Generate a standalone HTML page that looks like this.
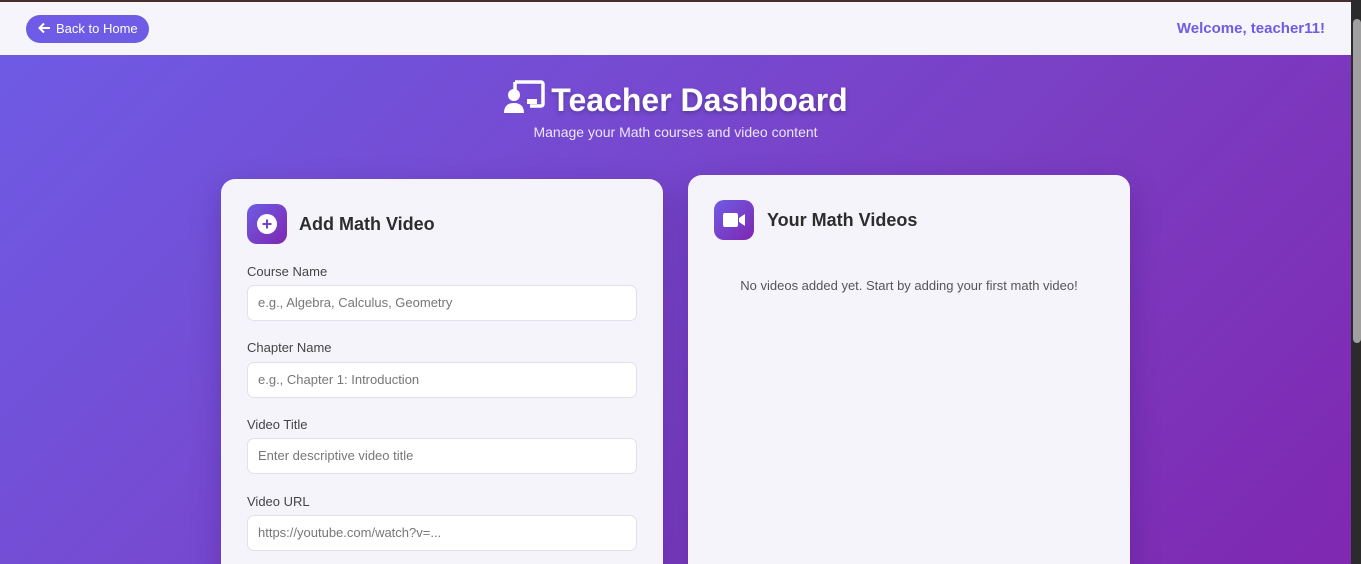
<!DOCTYPE html>
<html><head><meta charset="utf-8"><style>
*{box-sizing:border-box;margin:0;padding:0}
html,body{width:1361px;height:564px;overflow:hidden;font-family:"Liberation Sans",sans-serif}
body{position:relative;background:linear-gradient(135deg,#6e5ce6 0%,#7a3fc4 60%,#7f27b0 100%)}
.topline{position:absolute;left:0;top:0;width:1351px;height:2px;background:#4a2c2c}
.nav{position:absolute;left:0;top:2px;width:1351px;height:53px;background:#f7f5fc}
.back{position:absolute;left:26px;top:13px;width:123px;height:28px;border-radius:14px;background:#6e5ce6;color:#fff;font-size:13px;line-height:28px;padding-left:30px}
.back svg{position:absolute;left:12px;top:7px}
.welcome{position:absolute;right:26px;top:18px;color:#6e5ce6;font-weight:bold;font-size:15px}
.sb{position:absolute;left:1351px;top:0;width:10px;height:564px;background:#2b2b2b}
.thumb{position:absolute;left:2px;top:19px;width:8px;height:324px;background:#a0a0a0;border-radius:4px}
h1{position:absolute;left:0;width:1351px;top:80px;text-align:center;color:#fff;font-size:32px;font-weight:bold;text-shadow:0 2px 4px rgba(0,0,0,.25)}
h1 svg{vertical-align:-3px;margin-right:6px}
.sub{position:absolute;left:0;width:1351px;top:124px;text-align:center;color:#ece6fb;font-size:14px}
.card{position:absolute;background:#f6f4fb;border-radius:14px;box-shadow:0 10px 30px rgba(40,0,90,.25)}
.ic{position:absolute;width:40px;height:40px;border-radius:10px;background:linear-gradient(135deg,#6e5ce6,#7f27b0)}
.ct{position:absolute;font-size:18px;font-weight:bold;color:#2d2d2d}
.lbl{position:absolute;left:26px;font-size:13px;color:#444}
.inp{position:absolute;left:26px;width:390px;height:36px;background:#fff;border:1px solid #e2e0ea;border-radius:7px;font-size:13px;color:#777;padding-left:10px;line-height:34px}
</style></head><body>
<div class="topline"></div>
<div class="nav">
<div class="back"><svg width="13" height="12" viewBox="0 0 13 12"><path d="M12 6H2M6 1.5L1.5 6 6 10.5" stroke="#fff" stroke-width="2" fill="none"/></svg>Back to Home</div>
<div class="welcome">Welcome, teacher11!</div>
</div>
<div class="sb"><div class="thumb"></div></div>
<h1><svg width="42" height="34" viewBox="0 0 42 34"><path d="M12 2h26a2 2 0 0 1 2 2v20a2 2 0 0 1-2 2H27" stroke="#fff" stroke-width="3.5" fill="none"/><path d="M12 2v8" stroke="#fff" stroke-width="3.5"/><rect x="24" y="19" width="10" height="5" fill="#fff"/><circle cx="11" cy="15" r="6" fill="#fff"/><path d="M1 33c0-7 4-10 10-10s10 3 10 10z" fill="#fff"/></svg>Teacher Dashboard</h1>
<div class="sub">Manage your Math courses and video content</div>

<div class="card" style="left:221px;top:179px;width:442px;height:400px">
<div class="ic" style="left:26px;top:25px"><svg width="40" height="40"><circle cx="20" cy="20" r="10" fill="#fff"/><path d="M20 15.5v9M15.5 20h9" stroke="#7a3fc4" stroke-width="2"/></svg></div>
<div class="ct" style="left:78px;top:35px">Add Math Video</div>
<div class="lbl" style="top:85px">Course Name</div>
<div class="inp" style="top:106px">e.g., Algebra, Calculus, Geometry</div>
<div class="lbl" style="top:161px">Chapter Name</div>
<div class="inp" style="top:183px">e.g., Chapter 1: Introduction</div>
<div class="lbl" style="top:238px">Video Title</div>
<div class="inp" style="top:259px">Enter descriptive video title</div>
<div class="lbl" style="top:315px">Video URL</div>
<div class="inp" style="top:336px">https://youtube.com/watch?v=...</div>
</div>

<div class="card" style="left:688px;top:175px;width:442px;height:404px">
<div class="ic" style="left:26px;top:25px"><svg width="40" height="40"><rect x="9" y="13" width="15" height="14" rx="2" fill="#fff"/><path d="M25 18l6-4v12l-6-4z" fill="#fff"/></svg></div>
<div class="ct" style="left:79px;top:35px">Your Math Videos</div>
<div style="position:absolute;left:0;width:442px;top:103px;text-align:center;font-size:13px;color:#555">No videos added yet. Start by adding your first math video!</div>
</div>
</body></html>
